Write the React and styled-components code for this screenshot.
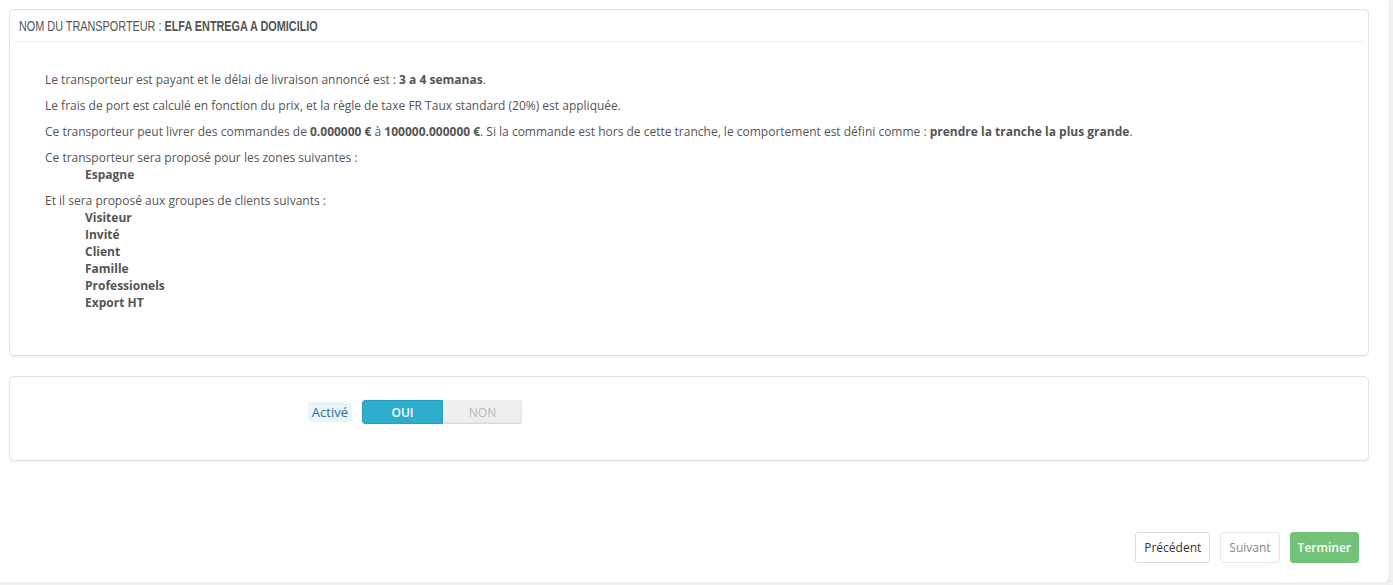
import React from "react";
import styled, { createGlobalStyle } from "styled-components";

const Global = createGlobalStyle`
  html, body { margin: 0; padding: 0; }
  body {
    background: #eff1f2;
    font-family: "Open Sans", "Liberation Sans", sans-serif;
    font-size: 12px;
    color: #555;
  }
`;

const Page = styled.div`
  width: 1389px;
  height: 582px;
  box-sizing: border-box;
  background: #fff;
  border-radius: 0 0 5px 0;
  box-shadow: 0 1px 2px rgba(0, 0, 0, 0.12);
  padding: 9px 20px 19px 9px;
  display: flex;
  flex-direction: column;
`;

const Panel = styled.section`
  border: 1px solid #e2e2e2;
  border-radius: 5px;
  box-shadow: 0 2px 0 rgba(0, 0, 0, 0.03);
  padding: 0 4px;
  margin-bottom: 20px;
  box-sizing: border-box;
`;

const PanelHeading = styled.h3`
  margin: 0;
  height: 31px;
  line-height: 32px;
  border-bottom: 1px solid #eee;
  padding: 0 5px;
  font-family: "Liberation Sans", sans-serif;
  font-size: 14px;
  font-weight: 400;
  text-transform: uppercase;
  color: #555;
  white-space: nowrap;
  b { font-weight: 700; }
`;

const Condensed = styled.span`
  display: inline-block;
  transform: scaleX(0.775);
  transform-origin: left center;
`;

const Summary = styled.div`
  padding: 29px 31px 35px;
`;

const Para = styled.p`
  margin: 0 0 9px;
  line-height: 17px;
  b { font-weight: 700; }
`;

const Block = styled.div`
  margin-bottom: 9px;
  line-height: 17px;
`;

const Indented = styled.ul`
  list-style: none;
  margin: 0;
  padding: 0 0 0 40px;
  li { font-weight: 700; line-height: 17px; }
`;

const FormRow = styled.div`
  display: grid;
  grid-template-columns: 338px 160px;
  column-gap: 10px;
  align-items: center;
  padding: 23px 0 36px;
`;

const Label = styled.label`
  justify-self: end;
  font-size: 13px;
  color: #31708f;
  background: #eaf4fb;
  border-radius: 3px;
  padding: 2px 4px;
  line-height: 16px;
`;

const Switch = styled.div`
  display: flex;
  height: 24px;
  border-radius: 3px;
  overflow: hidden;
  background: #eee;
  box-shadow: inset 0 -1px 2px rgba(0, 0, 0, 0.12);
`;

const SwitchOption = styled.span`
  flex: 1;
  display: flex;
  align-items: center;
  justify-content: center;
  font-size: 12px;
  font-weight: ${(p) => (p.$active ? 600 : 400)};
  color: ${(p) => (p.$active ? "#fff" : "#bbb")};
  background: ${(p) => (p.$active ? "#2eacce" : "transparent")};
  border: ${(p) => (p.$active ? "1px solid #2a9fbf" : "none")};
  border-radius: 3px 0 0 3px;
`;

const Footer = styled.div`
  margin-top: auto;
  display: flex;
  justify-content: flex-end;
  gap: 10px;
  padding-right: 10px;
`;

const Button = styled.button`
  height: 31px;
  padding: 0 ${(p) => (p.$variant === "success" ? 7 : 8)}px;
  font-family: "Open Sans", "Liberation Sans", sans-serif;
  font-size: 12px;
  border-radius: 3px;
  cursor: pointer;
  border: 1px solid ${(p) => (p.$variant === "success" ? "#72c279" : p.$disabled ? "#e8e8e8" : "#ddd")};
  background: ${(p) => (p.$variant === "success" ? "#72c279" : "#fff")};
  color: ${(p) => (p.$variant === "success" ? "#fff" : p.$disabled ? "#888" : "#333")};
  font-weight: ${(p) => (p.$variant === "success" ? 600 : 400)};
`;

export default function App() {
  return (
    <>
      <Global />
      <Page>
        <Panel>
          <PanelHeading>
            <Condensed>
              Nom du transporteur : <b>Elfa Entrega a domicilio</b>
            </Condensed>
          </PanelHeading>
          <Summary>
            <Para>
              Le transporteur est payant et le délai de livraison annoncé est : <b>3 a 4 semanas</b>.
            </Para>
            <Para>
              Le frais de port est calculé en fonction du prix, et la règle de taxe FR Taux standard (20%) est appliquée.
            </Para>
            <Para>
              Ce transporteur peut livrer des commandes de <b>0.000000 €</b> à <b>100000.000000 €</b>. Si la commande est hors de cette tranche, le comportement est défini comme : <b>prendre la tranche la plus grande</b>.
            </Para>
            <Block>
              Ce transporteur sera proposé pour les zones suivantes :
              <Indented>
                <li>Espagne</li>
              </Indented>
            </Block>
            <Block>
              Et il sera proposé aux groupes de clients suivants :
              <Indented>
                <li>Visiteur</li>
                <li>Invité</li>
                <li>Client</li>
                <li>Famille</li>
                <li>Professionels</li>
                <li>Export HT</li>
              </Indented>
            </Block>
          </Summary>
        </Panel>
        <Panel>
          <FormRow>
            <Label>Activé</Label>
            <Switch>
              <SwitchOption $active>OUI</SwitchOption>
              <SwitchOption>NON</SwitchOption>
            </Switch>
          </FormRow>
        </Panel>
        <Footer>
          <Button>Précédent</Button>
          <Button $disabled>Suivant</Button>
          <Button $variant="success">Terminer</Button>
        </Footer>
      </Page>
    </>
  );
}
